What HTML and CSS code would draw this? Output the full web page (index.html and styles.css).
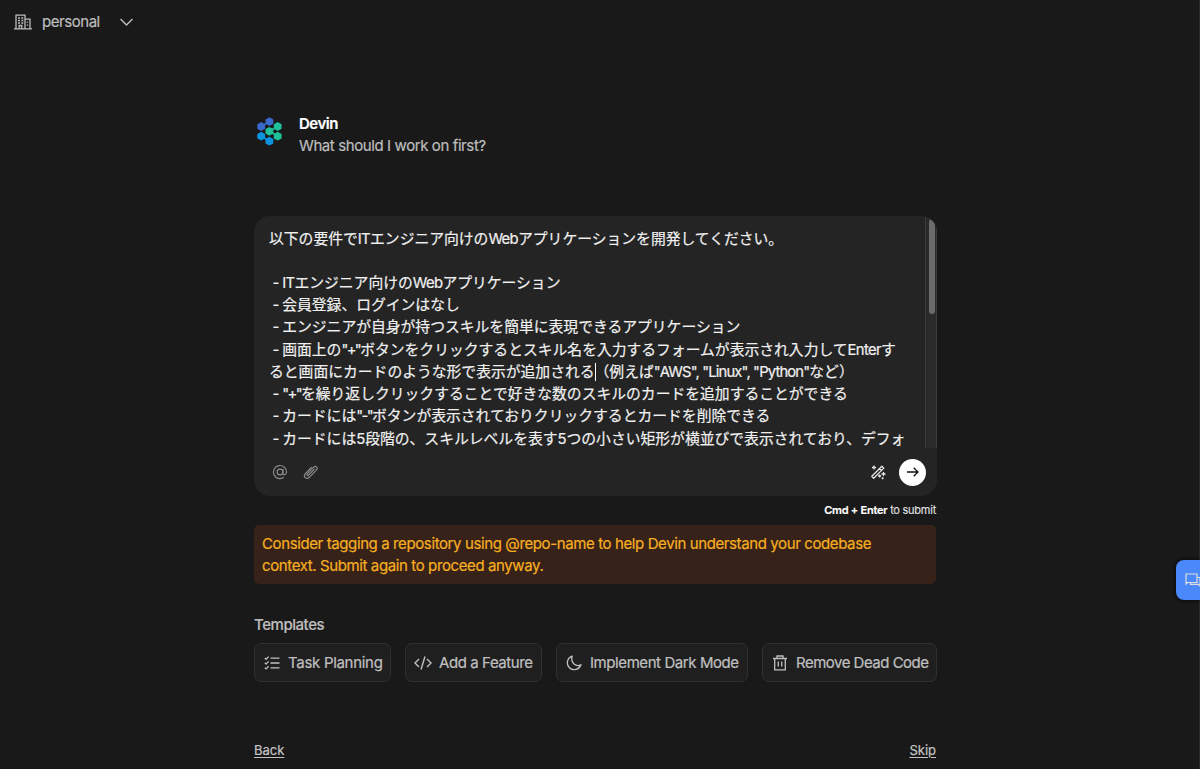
FILE: index.html
```html
<!DOCTYPE html>
<html lang="ja">
<head>
    <meta charset="utf-8">
    <title>Devin</title>
    <link rel="stylesheet" href="styles.css">
</head>
<body>

<header class="topbar">
    <svg class="icon-org" viewBox="0 0 18 16" fill="none" stroke="currentColor" stroke-width="1.3">
        <path d="M0 14.8h18M2 14.5V1.2h9v13.3M11 5.2h5v9.3M5.2 14.5v-3h2.6v3"/>
        <path d="M4 4h2M7.3 4h2M4 6.5h2M7.3 6.5h2M4 9h2M7.3 9h2M13.5 7.5v1.3M13.5 10.5v1.3"/>
    </svg>
    <span class="org-name">personal</span>
    <svg class="icon-chevron" viewBox="0 0 12 7" fill="none" stroke="currentColor" stroke-width="1.3"><path d="M.5.7 6 6.2 11.5.7"/></svg>
</header>

<main class="content">
    <section class="intro">
        <svg class="logo" viewBox="0 0 25 29">
            <defs><path id="hex" d="M0-4.400 3.900-2.200V2.200L0 4.400-3.900 2.200V-2.200z"/></defs>
            <g fill="#3969ca" stroke="#3969ca">
                <path stroke-width="1.6" d="M4.200 9.300 12.400 4.600"/>
                <g stroke="none"><use href="#hex" x="12.400" y="4.600"/><use href="#hex" x="4.200" y="9.500"/></g>
            </g>
            <g fill="#0c93e0" stroke="#0c93e0">
                <path stroke-width="1.6" d="M4.200 19.200 12.400 24"/>
                <g stroke="none"><use href="#hex" x="4.200" y="19.200"/><use href="#hex" x="12.400" y="24.200"/></g>
            </g>
            <g fill="none" stroke="#1fc19a">
                <path stroke-width="1.6" d="M20.700 9.500 12.400 14.300 20.700 19.200"/>
                <g fill="#1fc19a" stroke="none"><use href="#hex" x="20.700" y="9.500"/><use href="#hex" x="12.400" y="14.300"/><use href="#hex" x="20.700" y="19.200"/></g>
            </g>
        </svg>
        <div>
            <h1 class="intro-name">Devin</h1>
            <p class="intro-text">What should I work on first?</p>
        </div>
    </section>

    <section class="prompt">
        <div class="prompt-scroll">
            <div class="prompt-text">
                <p>以下の要件で<span class="latin">IT</span>エンジニア向けの<span class="latin">Web</span>アプリケーションを開発してください。</p>
                <p>&nbsp;</p>
                <p><span class="latin"> - IT</span>エンジニア向けの<span class="latin">Web</span>アプリケーション</p>
                <p><span class="latin"> - </span>会員登録、ログインはなし</p>
                <p><span class="latin"> - </span>エンジニアが自身が持つスキルを簡単に表現できるアプリケーション</p>
                <p><span class="latin"> - </span>画面上の<span class="quoted">"+"</span>ボタンをクリックするとスキル名を入力するフォームが表示され入力して<span class="latin">Enter</span>す</p>
                <p>ると画面にカードのような形で表示が追加される<span class="caret"></span>（例えば<span class="names">"AWS", "Linux", "Python"</span>など）</p>
                <p><span class="latin"> - </span><span class="quoted">"+"</span>を繰り返しクリックすることで好きな数のスキルのカードを追加することができる</p>
                <p><span class="latin"> - </span>カードには<span class="quoted">"-"</span>ボタンが表示されておりクリックするとカードを削除できる</p>
                <p><span class="latin"> - </span>カードには5段階の、スキルレベルを表す5つの小さい矩形が横並びで表示されており、デフォ</p>
            </div>
            <div class="scrollbar"><div class="scrollbar-thumb"></div></div>
        </div>
        <div class="toolbar">
            <svg class="icon-at" viewBox="0 0 16 16" fill="none" stroke="currentColor" stroke-width="1.2"><circle cx="8" cy="8" r="2.9"/><path d="M10.9 5v4.300c0 2.300 3.600 2 3.600-1.300a6.500 6.500 0 1 0-2.700 5.300"/></svg>
            <svg class="icon-clip" viewBox="0 0 16 16" fill="none" stroke="currentColor" stroke-width="1.2" stroke-linecap="round"><path d="M11.300 5.200 5.700 11.200c-.9 1-2.300-.3-1.400-1.300l6.300-6.800c2-2 4.800.6 2.900 2.700l-7.100 7.500c-3 2.900-6.700-.7-4-3.700l5.900-6.200"/></svg>
            <svg class="icon-wand" viewBox="0 0 16 16" fill="none" stroke="currentColor" stroke-width="1.3" stroke-linejoin="round"><path d="M1.800 12.300 11.900 2.200l1.900 1.900L3.700 14.200zM9.500 4.600l1.900 1.900"/><path d="M4 1.500v4M2 3.500h4M9.600 10.500v3M8.100 12h3M13.500 8v4M11.500 10h4M12.600 13.200v2M11.600 14.200h2"/></svg>
            <button class="send" aria-label="Submit"><svg viewBox="0 0 12 12" fill="none" stroke="currentColor" stroke-width="1.3"><path d="M0 6h11M6.700 1.700 11 6l-4.300 4.300"/></svg></button>
        </div>
    </section>
    <p class="hint"><b>Cmd + Enter</b> to submit</p>

    <div class="warning">
        <p>Consider tagging a repository using @repo-name to help Devin understand your codebase</p>
        <p>context. Submit again to proceed anyway.</p>
    </div>

    <h2 class="templates-title">Templates</h2>
    <div class="templates">
        <button class="template template-plan">
            <svg viewBox="0 0 16 16" fill="none" stroke="currentColor" stroke-width="1.3"><path d="M6.500 3.200H15.500M6.500 8H15.500M6.500 12.800H15.500M.8 3l1.300 1.300L4.600 1.600M.8 7.800l1.300 1.300 2.500-2.700M.8 12.600l1.300 1.300 2.500-2.700"/></svg>
            <span>Task Planning</span>
        </button>
        <button class="template template-feature">
            <svg viewBox="0 0 18 16" fill="none" stroke="currentColor" stroke-width="1.4"><path d="M5 4 1 8l4 4M13 4l4 4-4 4M11 1.500 7 14.500"/></svg>
            <span>Add a Feature</span>
        </button>
        <button class="template template-dark">
            <svg viewBox="0 0 16 16" fill="none" stroke="currentColor" stroke-width="1.3" stroke-linejoin="round"><path d="M6.200 1.200a6.900 6.900 0 1 0 8.700 8.500C10.200 12.300 4.100 8 6.200 1.200z"/></svg>
            <span>Implement Dark Mode</span>
        </button>
        <button class="template template-dead">
            <svg viewBox="0 0 16 16" fill="none" stroke="currentColor" stroke-width="1.3"><path d="M1 3.500h14M2.700 3.500v11.300h10.600V3.500M5 3.500V1h6v2.500M6.300 6.500v5M9.700 6.500v5"/></svg>
            <span>Remove Dead Code</span>
        </button>
    </div>

    <nav class="steps">
        <a href="#">Back</a>
        <a href="#">Skip</a>
    </nav>
</main>

<button class="chat" aria-label="Chat">
    <svg viewBox="0 0 16 14" fill="none" stroke="currentColor" stroke-width="1.2"><path d="M4 9.500H2.500L1 11V1h11v3.500M12 4.500V9.500H4M12.500 4.500H15V13l-1.700-1.700H5.500V9.500"/></svg>
</button>

</body>
</html>
```

FILE: styles.css
```css
* {
    box-sizing: border-box;
}

body {
    margin: 0;
    height: 769px;
    overflow: hidden;
    background: #191919;
    color: #bdbdbd;
    font-family: Inter, "Noto Sans CJK JP", sans-serif;
    font-size: 15px;
    line-height: 22px;
    -webkit-text-stroke: 0.2px;
    border-right: 1px solid #2b2b2b;
}

h1, h2, p {
    margin: 0;
    font-size: inherit;
    font-weight: 400;
    white-space: nowrap;
}

svg {
    display: block;
    flex: none;
}

button {
    font: inherit;
    border: none;
    padding: 0;
}

.topbar {
    display: flex;
    align-items: center;
    height: 43px;
    padding-left: 14px;
}

.icon-org {
    width: 18px;
    height: 16px;
}

.org-name {
    width: 58px;
    margin: 0 20px 0 10px;
    letter-spacing: -0.45px;
}

.icon-chevron {
    width: 13px;
    height: 8px;
}

.content {
    width: 683px;
    margin-left: 254px;
}

.intro {
    display: flex;
    height: 173px;
    padding: 70px 0 0 3px;
}

.logo {
    width: 25px;
    height: 29px;
    margin: 4px 17px 0 0;
}

.intro-name {
    color: #fff;
    font-weight: 600;
    letter-spacing: -0.5px;
}

.intro-text {
    letter-spacing: -0.4px;
}

.prompt {
    height: 280px;
    background: #242424;
    border-radius: 16px;
    overflow: hidden;
}

.prompt-scroll {
    display: flex;
    justify-content: space-between;
    height: 232px;
    overflow: hidden;
}

.prompt-text {
    padding: 11.6px 0 0 15px;
    color: #f0f0f0;
    font-size: 14.8px;
    line-height: 22.22px;
}

.prompt-text p {
    white-space: pre;
    height: 22.22px;
}

.latin {
    letter-spacing: -0.65px;
}

.names {
    letter-spacing: -0.85px;
}

.quoted {
    letter-spacing: -1.6px;
}

.caret {
    display: inline-block;
    width: 1px;
    height: 18px;
    margin-right: -1px;
    vertical-align: -4px;
    background: #fff;
}

.scrollbar {
    width: 12px;
    margin-top: 1px;
    padding: 2px 2px 0 3px;
    background: #2a2a2a;
    border: solid #3c3c3c;
    border-width: 0 1px;
}

.scrollbar-thumb {
    width: 6px;
    height: 95px;
    border-radius: 3px;
    background: #6b6b6b;
}

.toolbar {
    display: flex;
    align-items: center;
    height: 48px;
    padding: 0 11px 0 18px;
    color: #8c8c8c;
}

.icon-at,
.icon-clip,
.icon-wand {
    width: 16px;
    height: 16px;
}

.icon-clip {
    margin-left: 15px;
}

.icon-wand {
    margin: 0 13px 0 auto;
    color: #e6e6e6;
}

.send {
    display: grid;
    place-items: center;
    width: 27px;
    height: 27px;
    border-radius: 50%;
    background: #fff;
    color: #111;
}

.send svg {
    width: 12px;
    height: 12px;
}

.hint {
    height: 29px;
    padding: 3px 1px 0 0;
    font-size: 11px;
    letter-spacing: -0.25px;
    text-align: right;
    color: #ddd;
}

.hint b {
    color: #fff;
    font-weight: 600;
}

.warning {
    height: 59px;
    margin-right: 1px;
    padding: 8px;
    border-radius: 5px;
    background: #362218;
    color: #f7ae22;
    font-weight: 500;
    letter-spacing: -0.39px;
}

.templates-title {
    height: 34px;
    margin-top: 30px;
    font-weight: 500;
    letter-spacing: -0.45px;
}

.templates {
    display: flex;
    justify-content: space-between;
    height: 39px;
    margin-top: -5px;
}

.template {
    display: flex;
    align-items: center;
    gap: 8px;
    padding-left: 9px;
    border: 1px solid #303030;
    border-radius: 7px;
    background: #1f1f1f;
    color: #c0c0c0;
    letter-spacing: -0.42px;
    white-space: nowrap;
}

.template svg {
    width: 16px;
    height: 16px;
}

.template-plan {
    width: 137px;
    letter-spacing: -0.3px;
}

.template-feature {
    width: 137px;
}

.template-feature svg {
    width: 18px;
    margin: 0 -1px;
}

.template-dark {
    width: 192px;
}

.template-dead {
    width: 175px;
    letter-spacing: -0.5px;
}

.steps {
    display: flex;
    justify-content: space-between;
    margin-top: 57px;
    padding: 0 1px 0 0;
    font-size: 13px;
}

.steps a {
    color: #c4c4c4;
    text-underline-offset: 2px;
}

.chat {
    position: absolute;
    right: 0;
    top: 560px;
    width: 24px;
    height: 40px;
    padding-left: 9px;
    border-radius: 8px 0 0 8px;
    background: #4b88fa;
    color: #ddd;
    overflow: hidden;
    box-shadow: 0 0 4px #000;
}

.chat svg {
    width: 16px;
    height: 14px;
}
```
